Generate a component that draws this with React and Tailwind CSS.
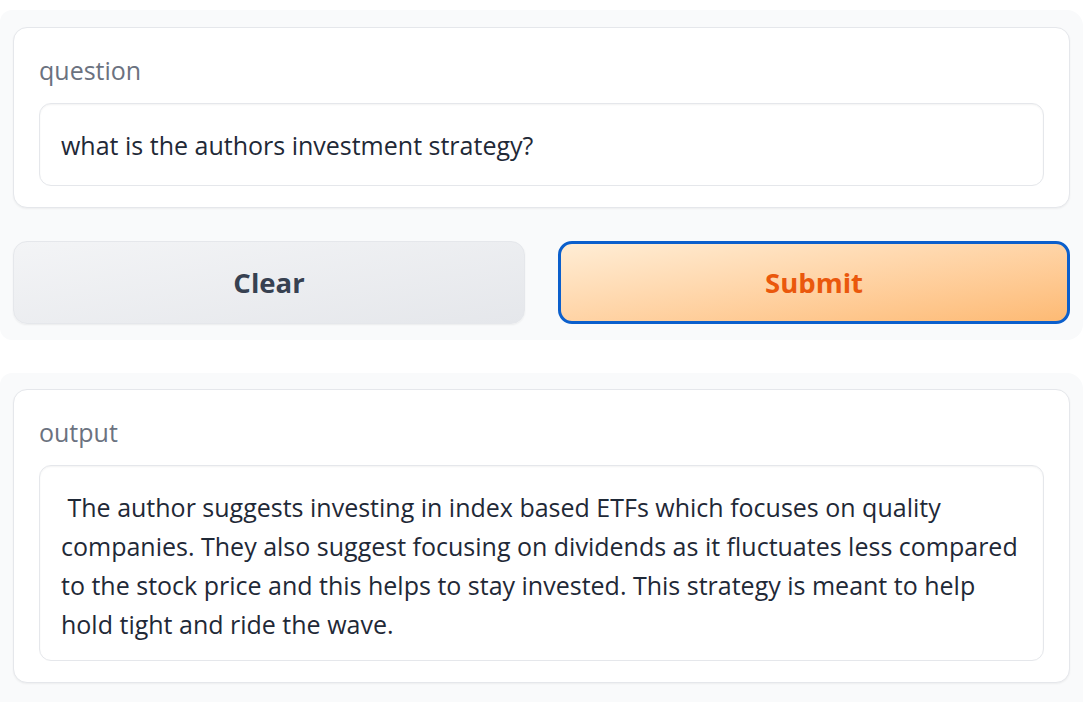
import { useState } from 'react';

// lines broken as in the rendered textarea
const answer = [
  ' The author suggests investing in index based ETFs which focuses on quality',
  'companies. They also suggest focusing on dividends as it fluctuates less compared',
  'to the stock price and this helps to stay invested. This strategy is meant to help',
  'hold tight and ride the wave.',
].join('\n');

const Field = ({ label, children }) => (
  <div className="bg-white border border-[#e5e7eb] rounded-[14px] shadow-[0_1px_2px_rgba(0,0,0,0.05)] px-[25px] pt-[27px] pb-[21px]">
    <div className="text-[25px] leading-[30px] text-[#6b7280] mb-[18px]">{label}</div>
    {children}
  </div>
);

const App = () => {
  const [question, setQuestion] = useState('what is the authors investment strategy?');

  return (
    <div className="min-h-screen flex flex-col bg-white pt-[10px] pr-[5px] font-['Open_Sans',sans-serif] text-[#1f2937]">
      {/* Input block */}
      <div className="bg-[#f9fafb] rounded-r-[16px] rounded-l-[12px] px-[13px] pt-[17px] pb-[16px]">
        <Field label="question">
          <input
            value={question}
            onChange={(e) => setQuestion(e.target.value)}
            className="w-full h-[83px] px-[21px] text-[25px] leading-[39px] bg-white border border-[#e5e7eb] rounded-[12px] shadow-[inset_0_1px_2px_rgba(0,0,0,0.05)] outline-none"
          />
        </Field>

        <div className="grid grid-cols-2 gap-[33px] mt-[33px]">
          <button className="h-[83px] rounded-[14px] border border-[#e5e7eb] bg-gradient-to-br from-[#f3f4f6] to-[#e5e7eb] shadow-[0_1px_2px_rgba(0,0,0,0.06)] text-[27.5px] font-bold text-[#374151]">
            Clear
          </button>
          <button className="h-[83px] rounded-[14px] border-[3px] border-[#0b5fcc] bg-gradient-to-br from-[#ffedd5] to-[#fdba74] text-[27.5px] font-bold text-[#ea580c]">
            Submit
          </button>
        </div>
      </div>

      {/* Output block */}
      <div className="flex-1 mt-[33px] bg-[#f9fafb] rounded-tr-[16px] rounded-tl-[12px] px-[13px] pt-[16px] pb-[20px]">
        <Field label="output">
          <div className="w-full pl-[21px] pr-[8px] pt-[22px] pb-[16px] text-[25px] leading-[39px] whitespace-pre overflow-hidden bg-white border border-[#e5e7eb] rounded-[12px] shadow-[inset_0_1px_2px_rgba(0,0,0,0.05)]">
            {answer}
          </div>
        </Field>
      </div>
    </div>
  );
};

export default App;
